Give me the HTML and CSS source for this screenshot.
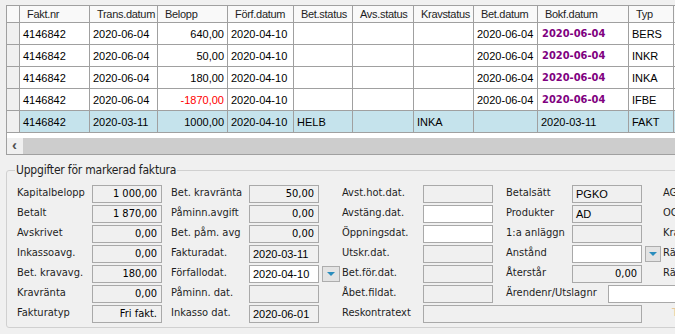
FILE: index.html
```html
<!DOCTYPE html>
<html lang="sv">

<head>
  <meta charset="UTF-8">
  <meta name="viewport" content="width=device-width, initial-scale=1.0">
  <title>Fakturor</title>
  <link rel="stylesheet" href="styles.css">
</head>

<body>
  <div class="grid">
    <table class="trans">
      <thead>
        <tr>
          <th class="w-rh"></th>
          <th class="w-fakt">Fakt.nr</th>
          <th class="w-trans">Trans.datum</th>
          <th class="w-bel">Belopp</th>
          <th class="w-forf">Förf.datum</th>
          <th class="w-bstat">Bet.status</th>
          <th class="w-avs">Avs.status</th>
          <th class="w-krav">Kravstatus</th>
          <th class="w-bdat">Bet.datum</th>
          <th class="w-bokf">Bokf.datum</th>
          <th class="w-typ">Typ</th>
          <th class="w-more"></th>
        </tr>
      </thead>
      <tbody>
        <tr>
          <td class="rh"></td>
          <td>4146842</td>
          <td>2020-06-04</td>
          <td class="num">640,00</td>
          <td>2020-04-10</td>
          <td></td>
          <td></td>
          <td></td>
          <td>2020-06-04</td>
          <td class="bokf">2020-06-04</td>
          <td>BERS</td>
          <td></td>
        </tr>
        <tr>
          <td class="rh"></td>
          <td>4146842</td>
          <td>2020-06-04</td>
          <td class="num">50,00</td>
          <td>2020-04-10</td>
          <td></td>
          <td></td>
          <td></td>
          <td>2020-06-04</td>
          <td class="bokf">2020-06-04</td>
          <td>INKR</td>
          <td></td>
        </tr>
        <tr>
          <td class="rh"></td>
          <td>4146842</td>
          <td>2020-06-04</td>
          <td class="num">180,00</td>
          <td>2020-04-10</td>
          <td></td>
          <td></td>
          <td></td>
          <td>2020-06-04</td>
          <td class="bokf">2020-06-04</td>
          <td>INKA</td>
          <td></td>
        </tr>
        <tr>
          <td class="rh"></td>
          <td>4146842</td>
          <td>2020-06-04</td>
          <td class="num neg">-1870,00</td>
          <td>2020-04-10</td>
          <td></td>
          <td></td>
          <td></td>
          <td>2020-06-04</td>
          <td class="bokf">2020-06-04</td>
          <td>IFBE</td>
          <td></td>
        </tr>
        <tr class="selected">
          <td class="rh"></td>
          <td>4146842</td>
          <td>2020-03-11</td>
          <td class="num">1000,00</td>
          <td>2020-04-10</td>
          <td>HELB</td>
          <td></td>
          <td>INKA</td>
          <td></td>
          <td>2020-03-11</td>
          <td>FAKT</td>
          <td></td>
        </tr>
      </tbody>
    </table>
    <div class="hscroll">
      <div class="arrow">&lsaquo;</div>
      <div class="thumb"></div>
    </div>
  </div>

  <fieldset class="details">
    <legend>Uppgifter för markerad faktura</legend>
    <div class="form">
      <!-- rad 1 -->
      <div class="lbl c1">Kapitalbelopp</div>
      <div class="box b1 num">1 000,00</div>
      <div class="lbl c2">Bet. kravränta</div>
      <div class="box b2 num">50,00</div>
      <div class="lbl c3">Avst.hot.dat.</div>
      <div class="box b3"></div>
      <div class="lbl c4">Betalsätt</div>
      <div class="box b4 date">PGKO</div>
      <div class="lbl c5">AG-status</div>

      <!-- rad 2 -->
      <div class="lbl c1">Betalt</div>
      <div class="box b1 num">1 870,00</div>
      <div class="lbl c2">Påminn.avgift</div>
      <div class="box b2 num">0,00</div>
      <div class="lbl c3">Avstäng.dat.</div>
      <div class="box b3 edit"></div>
      <div class="lbl c4">Produkter</div>
      <div class="box b4 date">AD</div>
      <div class="lbl c5">OCR-nr</div>

      <!-- rad 3 -->
      <div class="lbl c1">Avskrivet</div>
      <div class="box b1 num">0,00</div>
      <div class="lbl c2">Bet. påm. avg</div>
      <div class="box b2 num">0,00</div>
      <div class="lbl c3">Öppningsdat.</div>
      <div class="box b3 edit"></div>
      <div class="lbl c4">1:a anläggn</div>
      <div class="box b4"></div>
      <div class="lbl c5">Kravkod</div>

      <!-- rad 4 -->
      <div class="lbl c1">Inkassoavg.</div>
      <div class="box b1 num">0,00</div>
      <div class="lbl c2">Fakturadat.</div>
      <div class="box b2 date">2020-03-11</div>
      <div class="lbl c3">Utskr.dat.</div>
      <div class="box b3"></div>
      <div class="lbl c4">Anstånd</div>
      <div class="box b4 edit"></div>
      <div class="drop d2"><span class="tri"></span></div>
      <div class="lbl c5">Räntekod</div>

      <!-- rad 5 -->
      <div class="lbl c1">Bet. kravavg.</div>
      <div class="box b1 num">180,00</div>
      <div class="lbl c2">Förfallodat.</div>
      <div class="box b2 date edit">2020-04-10</div>
      <div class="drop d1"><span class="tri"></span></div>
      <div class="lbl c3">Bet.för.dat.</div>
      <div class="box b3"></div>
      <div class="lbl c4">Återstår</div>
      <div class="box b4 num">0,00</div>
      <div class="lbl c5">Räntedatum</div>

      <!-- rad 6 -->
      <div class="lbl c1">Kravränta</div>
      <div class="box b1 num">0,00</div>
      <div class="lbl c2">Påminn. dat.</div>
      <div class="box b2"></div>
      <div class="lbl c3">Åbet.fildat.</div>
      <div class="box b3"></div>
      <div class="arende">
        <div class="lbl arende-lbl">Ärendenr/Utslagnr</div>
        <div class="box edit arende-box"></div>
      </div>

      <!-- rad 7 -->
      <div class="lbl c1">Fakturatyp</div>
      <div class="box b1 num">Fri fakt.</div>
      <div class="lbl c2">Inkasso dat.</div>
      <div class="box b2 date">2020-06-01</div>
      <div class="lbl c3">Reskontratext</div>
      <div class="box wide"></div>
      <div class="lbl c5 faded">Text</div>
    </div>
  </fieldset>
</body>

</html>
```

FILE: styles.css
```css
* {
  box-sizing: border-box;
}

html,
body {
  overflow: hidden;
}

body {
  margin: 0;
  background-color: #f0f0f0;
  font-family: "Liberation Sans", Arial, sans-serif;
  font-size: 11px;
  color: #000;
}

/* Transaktionsgrid */
.grid {
  margin: 5px 0 0 6px;
  width: 740px;
  border-top: 1px solid #a0a0a0;
  border-left: 1px solid #a0a0a0;
  border-bottom: 1px solid #a0a0a0;
  background-color: #fff;
}

.trans {
  table-layout: fixed;
  border-collapse: separate;
  border-spacing: 0;
  width: 727px;
}

.trans th,
.trans td {
  border-right: 1px solid #a0a0a0;
  border-bottom: 1px solid #a0a0a0;
  padding: 0 3px;
  white-space: nowrap;
  overflow: hidden;
  text-align: left;
}

.trans th {
  height: 17px;
  font-weight: normal;
  font-size: 11px;
  letter-spacing: -0.3px;
  color: #1e1e1e;
  padding-left: 7px;
  background-color: #f9f9f9;
}

.trans td {
  height: 22px;
}

.w-rh { width: 13px; }
.w-fakt { width: 70px; }
.w-trans { width: 68px; }
.w-bel { width: 70px; }
.w-forf { width: 66px; }
.w-bstat { width: 59px; }
.w-avs { width: 61px; }
.w-krav { width: 60px; }
.w-bdat { width: 64px; }
.w-bokf { width: 91px; }
.w-typ { width: 45px; }
.w-more { width: 60px; }

.trans td.rh {
  background-color: #f0f0f0;
}

.trans td.num {
  text-align: right;
}

.trans td.neg {
  color: #ff0000;
}

.trans td.bokf {
  font-family: "DejaVu Sans Condensed", "DejaVu Sans", sans-serif;
  font-weight: bold;
  color: #800080;
  padding-left: 4px;
}

.trans tr.selected td {
  background-color: #c5e3ec;
}

.trans tr.selected td.rh {
  background-color: #f0f0f0;
}

.hscroll {
  display: flex;
  height: 16px;
  margin-top: 5px;
}

.arrow {
  width: 16px;
  background-color: #f0f0f0;
  font-size: 15px;
  line-height: 14px;
  font-weight: bold;
  color: #505050;
  padding-left: 5px;
}

.thumb {
  flex: 1;
  background-color: #cdcdcd;
}

/* Uppgifter-panelen */
.details {
  margin: 8px 0 0 6px;
  padding: 8px 0 0 10px;
  width: 720px;
  height: 165px;
  border: 1px solid #d0d0d0;
  border-radius: 3px;
  font-family: "DejaVu Sans Condensed", "DejaVu Sans", sans-serif;
}

.details legend {
  font-size: 12px;
  letter-spacing: -0.2px;
  padding: 0 1px;
  margin-left: -2px;
  color: #1e1e1e;
}

.form {
  display: grid;
  grid-template-columns: 75px 70px 9px 78px 70px 3px 18px 2px 81px 70px 13px 66px 70px 3px 16px 2px 80px;
  grid-auto-rows: 18px;
  row-gap: 2px;
}

.lbl {
  line-height: 16px;
  white-space: nowrap;
  color: #1e1e1e;
}

.c1 { grid-column: 1; }
.b1 { grid-column: 2; }
.c2 { grid-column: 4; }
.b2 { grid-column: 5; }
.d1 { grid-column: 7; }
.c3 { grid-column: 9; }
.b3 { grid-column: 10; }
.c4 { grid-column: 12; }
.b4 { grid-column: 13; }
.d2 { grid-column: 15; }
.c5 { grid-column: 17; }

.box {
  border: 1px solid #a9a9a9;
  background-color: #f0f0f0;
  line-height: 16px;
  padding: 0 3px;
  white-space: nowrap;
  overflow: hidden;
}

.box.edit {
  background-color: #fff;
}

.box.num {
  text-align: right;
  padding-right: 4px;
}

.box.date {
  font-family: "Liberation Sans", Arial, sans-serif;
}

.box.wide {
  grid-column: 10 / 14;
}

.drop {
  margin-top: 1px;
  height: 16px;
  border: 1px solid #adadad;
  background-color: #e3e3e3;
  display: flex;
  align-items: center;
  justify-content: center;
}

.tri {
  width: 0;
  height: 0;
  border-left: 4px solid transparent;
  border-right: 4px solid transparent;
  border-top: 4px solid #2a8dbd;
}

.arende {
  grid-column: 12 / 18;
  display: flex;
}

.arende-lbl {
  width: 102px;
  flex-shrink: 0;
}

.arende-box {
  flex: 1;
}

.faded {
  color: #e6c89c;
  padding-left: 9px;
}
```
